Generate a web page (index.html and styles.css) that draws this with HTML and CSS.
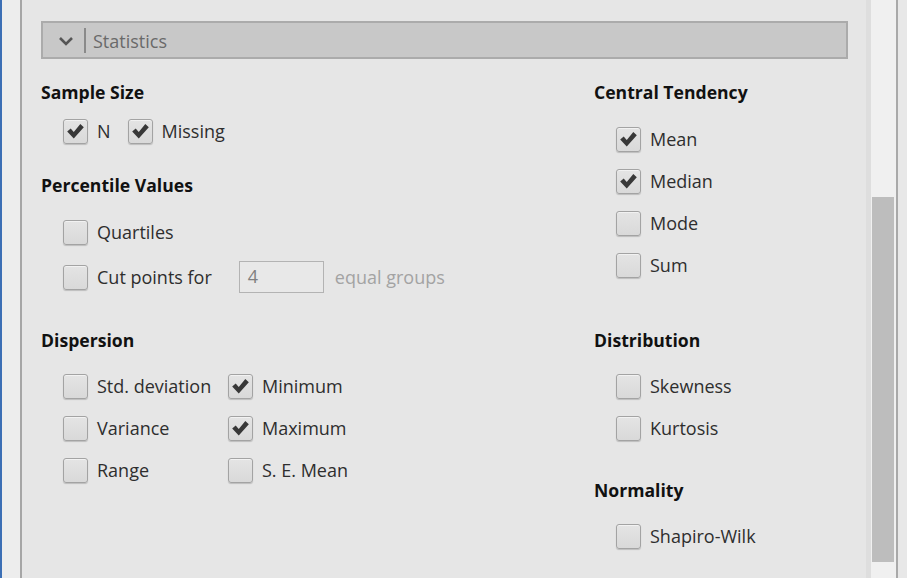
FILE: index.html
```html
<!DOCTYPE html>
<html>
<head>
<meta charset="utf-8">
<link rel="stylesheet" href="styles.css">
</head>
<body>
<div class="app">
  <div class="edge-blue"></div>
  <div class="edge-light"></div>
  <div class="edge-line"></div>
  <main class="panel">
    <div class="section-head">
      <svg class="chev" width="16" height="10" viewBox="0 0 16 10"><path d="M2 2 L8 8 L14 2" fill="none" stroke="#555" stroke-width="2.6"/></svg>
      <span class="sep"></span>
      <span class="head-title">Statistics</span>
    </div>
    <div class="cols">
      <div class="col col-left">
        <div class="group g-sample">
          <div class="title">Sample Size</div>
          <div class="inline-row">
            <label class="cb"><span class="box checked"><svg viewBox="0 0 24 24"><path d="M2.5 12 L6.5 8.5 L10 12.5 L17.5 3.5 L21.5 7 L10 20 Z"/></svg></span><span class="lbl">N</span></label>
            <label class="cb"><span class="box checked"><svg viewBox="0 0 24 24"><path d="M2.5 12 L6.5 8.5 L10 12.5 L17.5 3.5 L21.5 7 L10 20 Z"/></svg></span><span class="lbl">Missing</span></label>
          </div>
        </div>
        <div class="group g-pct">
          <div class="title">Percentile Values</div>
          <div class="list">
            <label class="cb row"><span class="box"></span><span class="lbl">Quartiles</span></label>
            <div class="row cut-row">
              <label class="cb"><span class="box"></span><span class="lbl">Cut points for</span></label>
              <span class="num">4</span>
              <span class="muted">equal groups</span>
            </div>
          </div>
        </div>
        <div class="group g-disp">
          <div class="title">Dispersion</div>
          <div class="grid2">
            <label class="cb row"><span class="box"></span><span class="lbl">Std. deviation</span></label>
            <label class="cb row"><span class="box checked"><svg viewBox="0 0 24 24"><path d="M2.5 12 L6.5 8.5 L10 12.5 L17.5 3.5 L21.5 7 L10 20 Z"/></svg></span><span class="lbl">Minimum</span></label>
            <label class="cb row"><span class="box"></span><span class="lbl">Variance</span></label>
            <label class="cb row"><span class="box checked"><svg viewBox="0 0 24 24"><path d="M2.5 12 L6.5 8.5 L10 12.5 L17.5 3.5 L21.5 7 L10 20 Z"/></svg></span><span class="lbl">Maximum</span></label>
            <label class="cb row"><span class="box"></span><span class="lbl">Range</span></label>
            <label class="cb row"><span class="box"></span><span class="lbl">S. E. Mean</span></label>
          </div>
        </div>
      </div>
      <div class="col col-right">
        <div class="group g-central">
          <div class="title">Central Tendency</div>
          <div class="list">
            <label class="cb row"><span class="box checked"><svg viewBox="0 0 24 24"><path d="M2.5 12 L6.5 8.5 L10 12.5 L17.5 3.5 L21.5 7 L10 20 Z"/></svg></span><span class="lbl">Mean</span></label>
            <label class="cb row"><span class="box checked"><svg viewBox="0 0 24 24"><path d="M2.5 12 L6.5 8.5 L10 12.5 L17.5 3.5 L21.5 7 L10 20 Z"/></svg></span><span class="lbl">Median</span></label>
            <label class="cb row"><span class="box"></span><span class="lbl">Mode</span></label>
            <label class="cb row"><span class="box"></span><span class="lbl">Sum</span></label>
          </div>
        </div>
        <div class="group g-dist">
          <div class="title">Distribution</div>
          <div class="list">
            <label class="cb row"><span class="box"></span><span class="lbl">Skewness</span></label>
            <label class="cb row"><span class="box"></span><span class="lbl">Kurtosis</span></label>
          </div>
        </div>
        <div class="group g-norm">
          <div class="title">Normality</div>
          <div class="list">
            <label class="cb row"><span class="box"></span><span class="lbl">Shapiro-Wilk</span></label>
          </div>
        </div>
      </div>
    </div>
  </main>
  <div class="gutter"></div>
  <div class="scrollbar"><div class="thumb"></div></div>
  <div class="sb-line"></div>
  <div class="edge-right"></div>
</div>
</body>
</html>
```
FILE: styles.css
```css
* { box-sizing: border-box; }
html, body { margin: 0; padding: 0; }
body {
  width: 907px;
  height: 578px;
  overflow: hidden;
  font-family: "Open Sans", "Noto Sans", sans-serif;
  color: #333;
  background: #e6e6e6;
}
.app { display: flex; height: 578px; }
.edge-blue { width: 2px; background: #3c6fb5; }
.edge-light { width: 18px; background: #ededed; }
.edge-line { width: 2px; background: #a6a6a6; }
.panel {
  width: 844px;
  background: #e6e6e6;
  padding: 21px 18px 0 19px;
}
.gutter { width: 5px; background: #dedede; }
.scrollbar {
  width: 25px;
  background: #f0f0f0;
  padding: 197px 2px 0 1px;
}
.thumb { height: 365px; background: #bdbdbd; }
.sb-line { width: 2px; background: #a9a9a9; }
.edge-right { flex: 1; background: #e8e8e8; }

.section-head {
  height: 38px;
  background: #c8c8c8;
  border: 2px solid #ababab;
  display: flex;
  align-items: center;
  padding-left: 15px;
}
.chev { display: block; margin-top: 1px; }
.sep { width: 2px; height: 25px; background: #8a8a8a; margin-left: 10px; margin-right: 7px; }
.head-title { font-size: 18px; color: #6a6a6a; line-height: 24px; margin-top: 2px; }

.cols { display: grid; grid-template-columns: 553px 1fr; }
.col { display: flex; flex-direction: column; }
.title { font-size: 17.6px; font-weight: 700; color: #111; line-height: 24px; height: 24px; }
.group { display: flex; flex-direction: column; }
.list { display: flex; flex-direction: column; padding-left: 22px; margin-top: 14px; }
.row { height: 42px; display: flex; align-items: center; }

.g-sample { margin-top: 21px; }
.inline-row { display: flex; gap: 17px; padding-left: 22px; margin-top: 6px; height: 42px; align-items: center; }
.g-pct { margin-top: 21px; }
.cut-row { margin-top: 3px; }
.g-disp { margin-top: 30px; }
.grid2 { display: grid; grid-template-columns: 165px 1fr; padding-left: 22px; margin-top: 13px; }

.g-central { margin-top: 21px; }
.g-central .list { margin-top: 14px; }
.g-dist { margin-top: 42px; }
.g-dist .list, .g-norm .list { margin-top: 13px; }
.g-norm { margin-top: 29px; }

.cb { display: flex; align-items: center; }
.box {
  width: 25px; height: 25px;
  border: 1px solid #a3a3a3;
  border-radius: 3px;
  background: linear-gradient(#e4e4e4, #d9d9d9);
  box-shadow: 0 1px 1px rgba(0,0,0,0.18), inset 0 1px 0 rgba(255,255,255,0.5);
  display: flex; align-items: center; justify-content: center;
}
.box svg { width: 21px; height: 21px; fill: #383838; }
.lbl { font-size: 18px; margin-left: 9px; line-height: 24px; color: #2e2e2e; }

.num {
  width: 85px; height: 32px;
  border: 1px solid #b3b3b3;
  background: #e8e8e8;
  margin-left: 27px;
  padding-left: 8px;
  font-size: 18px; color: #808080;
  line-height: 28px;
}
.muted { font-size: 18px; color: #a3a3a3; margin-left: 11px; }
```
